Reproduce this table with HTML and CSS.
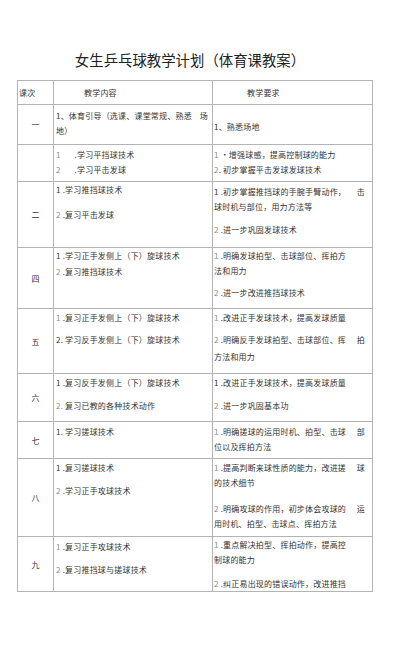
FILE: index.html
```html
<!DOCTYPE html>
<html lang="zh">
<head>
<meta charset="utf-8">
<title>女生乒乓球教学计划</title>
<link rel="stylesheet" href="styles.css">
</head>
<body>
<div class="page">
  <h1 class="title">女生乒乓球教学计划（体育课教案）</h1>
  <table class="plan">
    <colgroup><col class="c1"><col class="c2"><col class="c3"></colgroup>
    <tr class="head">
      <th class="h1">课次</th>
      <th class="h2">教学内容</th>
      <th class="h3">教学要求</th>
    </tr>
    <tr class="r1">
      <td class="lab">一</td>
      <td class="con"><div class="ln jl"><span>1、体育引导（选课、课堂常规、熟悉</span><span>场</span></div><div class="ln">地）</div></td>
      <td class="req p14"><div class="ln">1、熟悉场地</div></td>
    </tr>
    <tr class="r2">
      <td class="lab"></td>
      <td class="con p2"><div class="ln pre"><span class="n">1</span>       .学习平挡球技术</div><div class="ln pre"><span class="n">2</span>       .学习平击发球</div></td>
      <td class="req p2"><div class="ln"><span class="n">1</span> •增强球感，提高控制球的能力</div><div class="ln"><span class="n">2</span>. 初步掌握平击发球发球技术</div></td>
    </tr>
    <tr class="r3">
      <td class="lab">二</td>
      <td class="con p0"><div class="ln">1 .学习推挡球技术</div><div class="ln m10"><span class="n">2</span> .复习平击发球</div></td>
      <td class="req p2"><div class="ln jl"><span>1 .初步掌握推挡球的手腕手臂动作，</span><span>击</span></div><div class="ln">球时机与部位，用力方法等</div><div class="ln m8"><span class="n">2</span> .进一步巩固发球技术</div></td>
    </tr>
    <tr class="r4">
      <td class="lab">四</td>
      <td class="con p0"><div class="ln">1 .学习正手发侧上（下）旋球技术</div><div class="ln m1"><span class="n">2</span> .复习推挡球技术</div></td>
      <td class="req p0"><div class="ln"><span class="n">1</span> .明确发球拍型、击球部位、挥拍方</div><div class="ln">法和用力</div><div class="ln m7"><span class="n">2</span> .进一步改进推挡球技术</div></td>
    </tr>
    <tr class="r5">
      <td class="lab">五</td>
      <td class="con p1"><div class="ln"><span class="n">1</span> .复习正手发侧上（下）旋球技术</div><div class="ln m7">2. 学习反手发侧上（下）旋球技术</div></td>
      <td class="req p1"><div class="ln"><span class="n">1</span> .改进正手发球技术，提高发球质量</div><div class="ln m7 jl"><span><span class="n">2</span> .明确反手发球拍型、击球部位、挥</span><span>拍</span></div><div class="ln m2">方法和用力</div></td>
    </tr>
    <tr class="r6">
      <td class="lab">六</td>
      <td class="con p1"><div class="ln">1 .复习反手发侧上（下）旋球技术</div><div class="ln m8"><span class="n">2.</span> 复习已教的各种技术动作</div></td>
      <td class="req p1"><div class="ln">1 .改进正手发球技术，提高发球质量</div><div class="ln m8"><span class="n">2</span> .进一步巩固基本功</div></td>
    </tr>
    <tr class="r7">
      <td class="lab">七</td>
      <td class="con p2"><div class="ln">1. 学习搓球技术</div></td>
      <td class="req p2"><div class="ln jl"><span><span class="n">1</span> .明确搓球的运用时机、拍型、击球</span><span>部</span></div><div class="ln">位以及挥拍方法</div></td>
    </tr>
    <tr class="r8">
      <td class="lab">八</td>
      <td class="con p1"><div class="ln">1 .复习搓球技术</div><div class="ln m8"><span class="n">2</span> .学习正手攻球技术</div></td>
      <td class="req p1"><div class="ln jl"><span><span class="n">1</span> .提高判断来球性质的能力，改进搓</span><span>球</span></div><div class="ln">的技术细节</div><div class="ln m11 jl"><span><span class="n">2</span> .明确攻球的作用，初步体会攻球的</span><span>运</span></div><div class="ln">用时机、拍型、击球点、挥拍方法</div></td>
    </tr>
    <tr class="r9">
      <td class="lab">九</td>
      <td class="con p2"><div class="ln"><span class="n">1</span> .复习正手攻球技术</div><div class="ln m8"><span class="n">2</span> .复习推挡球与搓球技术</div></td>
      <td class="req p0"><div class="ln"><span class="n">1</span> .重点解决拍型、挥拍动作，提高控</div><div class="ln">制球的能力</div><div class="ln m9"><span class="n">2</span> .纠正易出现的错误动作，改进推挡</div></td>
    </tr>
  </table>
</div>
</body>
</html>
```

FILE: styles.css
```css
html, body {
  margin: 0;
  padding: 0;
  background: #ffffff;
}

.page {
  padding-top: 50px;
  font-family: "Noto Sans CJK SC", "Noto Sans", sans-serif;
  color: #333333;
}

.title {
  margin: 0 0 10px 17px;
  width: 346px;
  height: 20px;
  font-size: 14.4px;
  line-height: 20px;
  font-weight: normal;
  text-align: center;
  color: #222222;
}

.plan {
  margin-left: 17px;
  width: 355px;
  border-collapse: collapse;
  table-layout: fixed;
  font-size: 8px;
  letter-spacing: 0.2px;
}

.c1 { width: 36px; }
.c2 { width: 159px; }
.c3 { width: 160px; }

.plan th,
.plan td {
  border: 1px solid #b4b4b4;
  padding: 0;
  vertical-align: top;
  text-align: left;
  font-weight: normal;
}

.plan .head { height: 24px; }
.plan .head th {
  vertical-align: middle;
  font-size: 8px;
  color: #333333;
}
.plan th.h1 { padding-left: 1px; }
.plan th.h2 { padding-left: 30px; }
.plan th.h3 { padding-left: 34px; }

.r1 { height: 40px; }
.r2 { height: 37px; }
.r3 { height: 66px; }
.r4 { height: 61px; }
.r5 { height: 65px; }
.r6 { height: 48px; }
.r7 { height: 37px; }
.r8 { height: 78px; }
.r9 { height: 53px; }

.plan td.lab {
  vertical-align: middle;
  text-align: center;
  font-size: 8px;
  color: #333333;
}

.plan td.con {
  padding-left: 2px;
  padding-right: 4px;
  padding-top: 3px;
}

.plan td.req {
  padding-left: 1px;
  padding-right: 7px;
}

.plan td.p0 { padding-top: 0; }
.plan td.p1 { padding-top: 1px; }
.plan td.p2 { padding-top: 2px; }
.plan td.p14 { padding-top: 14px; }

.ln {
  line-height: 15px;
  white-space: nowrap;
}
.pre { white-space: pre; }

.jl {
  display: flex;
  justify-content: space-between;
}

.m1 { margin-top: 1px; }
.m2 { margin-top: 2px; }
.m7 { margin-top: 7px; }
.m8 { margin-top: 8px; }
.m9 { margin-top: 9px; }
.m10 { margin-top: 10px; }
.m11 { margin-top: 11px; }

.n { color: #8a8a8a; }
```
